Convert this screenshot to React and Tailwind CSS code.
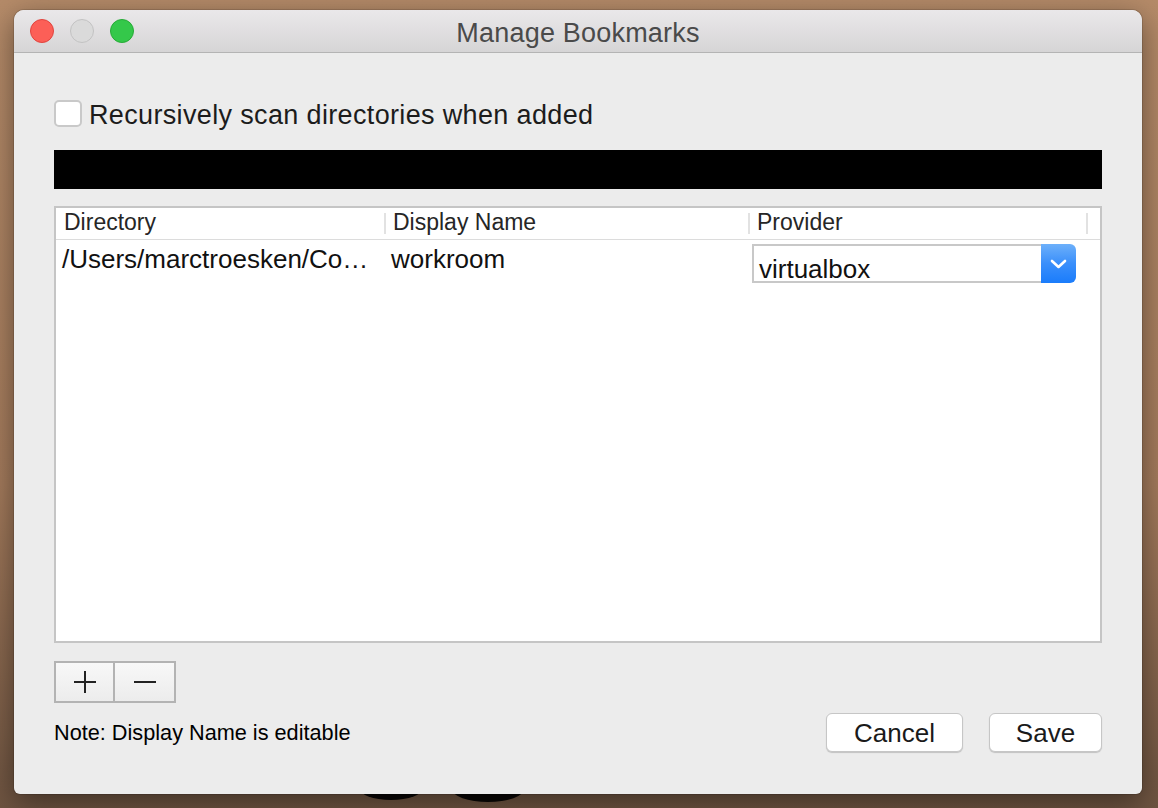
import React from "react";

const font = { fontFamily: '"Liberation Sans", Arial, sans-serif' };

function Light({ cls }) {
  return <div className={`w-[24px] h-[24px] rounded-full border ${cls}`} />;
}

export default function App() {
  return (
    <div
      className="relative w-[1158px] h-[808px] overflow-hidden bg-[linear-gradient(180deg,#b58b69_0%,#a47b5c_60%,#6e5441_100%)]"
      style={font}
    >
      <svg className="absolute left-0 top-[780px]" width="1158" height="28" viewBox="0 0 1158 28">
        <ellipse cx="391" cy="8" rx="32" ry="12" fill="#0a0706" />
        <ellipse cx="488" cy="9" rx="36" ry="13" fill="#0a0706" />
      </svg>
      <div className="relative pl-[14px] pt-[10px]">
        <div className="w-[1128px] h-[784px] rounded-t-[10px] rounded-b-[6px] bg-[#ececec] shadow-[0_8px_30px_rgba(0,0,0,0.45),0_0_0_1px_rgba(0,0,0,0.12)] flex flex-col overflow-hidden">
          {/* Title bar */}
          <div className="h-[43px] shrink-0 border-b border-[#b4b4b4] bg-[linear-gradient(180deg,#eae8ea_0%,#d6d5d6_100%)] grid grid-cols-[1fr_auto_1fr] items-center">
            <div className="flex items-center gap-[16px] pl-[16px]">
              <Light cls="bg-[#fc5f57] border-[#e0443e]" />
              <Light cls="bg-[#dadada] border-[#c2c2c2]" />
              <Light cls="bg-[#34c84a] border-[#27aa37]" />
            </div>
            <div className="mt-[3px] text-[27px] leading-[30px] tracking-[0.2px] text-[#4a4a4a]">Manage Bookmarks</div>
            <div />
          </div>

          {/* Body */}
          <div className="flex flex-col px-[40px] pt-[47px]">
            <div className="flex items-start gap-[7px]">
              <div className="w-[28px] h-[27px] rounded-[5px] bg-white border-2 border-[#c9c9c9]" />
              <div className="text-[27px] leading-[30px] tracking-[0.35px] text-[#1c1c1c]">
                Recursively scan directories when added
              </div>
            </div>

            <div className="mt-[20px] h-[39px] bg-black" />

            {/* Table */}
            <div className="mt-[17px] h-[437px] border-2 border-[#c5c5c5] bg-white flex flex-col">
              <div className="h-[32px] shrink-0 border-b border-[#dcdcdc] flex items-center text-[23px] leading-[28px] text-[#262626]">
                <div className="w-[328px] pl-[8px] -mt-[3px]">Directory</div>
                <div className="w-[2px] h-[21px] bg-[#e2e2e2]" />
                <div className="w-[362px] pl-[7px] -mt-[3px]">Display Name</div>
                <div className="w-[2px] h-[21px] bg-[#e2e2e2]" />
                <div className="w-[336px] pl-[7px] -mt-[3px]">Provider</div>
                <div className="w-[2px] h-[21px] bg-[#e2e2e2]" />
              </div>
              <div className="flex items-start text-[26px] leading-[30px] text-[#111]">
                <div className="w-[330px] pl-[6px] pt-[4px] whitespace-nowrap">/Users/marctroesken/Co…</div>
                <div className="w-[364px] pl-[5px] pt-[4px]">workroom</div>
                <div className="pl-[2px] pt-[4px]">
                  <div className="w-[324px] h-[39px] flex">
                    <div className="flex-1 bg-white border-2 border-r-0 border-[#c8c8c8] pl-[5px] pt-[10px] text-[26px] leading-[26px] text-[#111]">
                      virtualbox
                    </div>
                    <div className="w-[35px] h-[39px] rounded-r-[6px] bg-[linear-gradient(180deg,#6db0fa_0%,#3a8ffb_50%,#1a7cfb_100%)] flex items-center justify-center">
                      <svg width="17" height="10" viewBox="0 0 17 10">
                        <path d="M2 2 L8.5 8 L15 2" fill="none" stroke="#fff" strokeWidth="2.6" strokeLinecap="round" strokeLinejoin="round" />
                      </svg>
                    </div>
                  </div>
                </div>
              </div>
            </div>

            {/* +/- */}
            <div className="mt-[18px] w-[122px] h-[42px] flex border-2 border-[#b3b3b3] bg-[linear-gradient(180deg,#f8f8f8_0%,#ececec_100%)]">
              <div className="w-[59px] h-full flex items-center justify-center border-r-2 border-[#b3b3b3]">
                <svg width="24" height="24" viewBox="0 0 24 24">
                  <path d="M12 1 V23 M1 12 H23" stroke="#222" strokeWidth="2" />
                </svg>
              </div>
              <div className="flex-1 h-full flex items-center justify-center">
                <svg width="24" height="24" viewBox="0 0 24 24">
                  <path d="M1 12 H23" stroke="#222" strokeWidth="2" />
                </svg>
              </div>
            </div>

            {/* Bottom row */}
            <div className="mt-[10px] flex items-center">
              <div className="flex-1 text-[21.7px] leading-[26px] text-black">Note: Display Name is editable</div>
              <button className="w-[137px] h-[39px] rounded-[6px] bg-white border border-[#c6c6c6] shadow-[0_1px_1px_rgba(0,0,0,0.18)] text-[26px] leading-[30px] text-[#1a1a1a]">
                Cancel
              </button>
              <button className="ml-[26px] w-[113px] h-[39px] rounded-[6px] bg-white border border-[#c6c6c6] shadow-[0_1px_1px_rgba(0,0,0,0.18)] text-[26px] leading-[30px] text-[#1a1a1a]">
                Save
              </button>
            </div>
          </div>
        </div>
      </div>
    </div>
  );
}
